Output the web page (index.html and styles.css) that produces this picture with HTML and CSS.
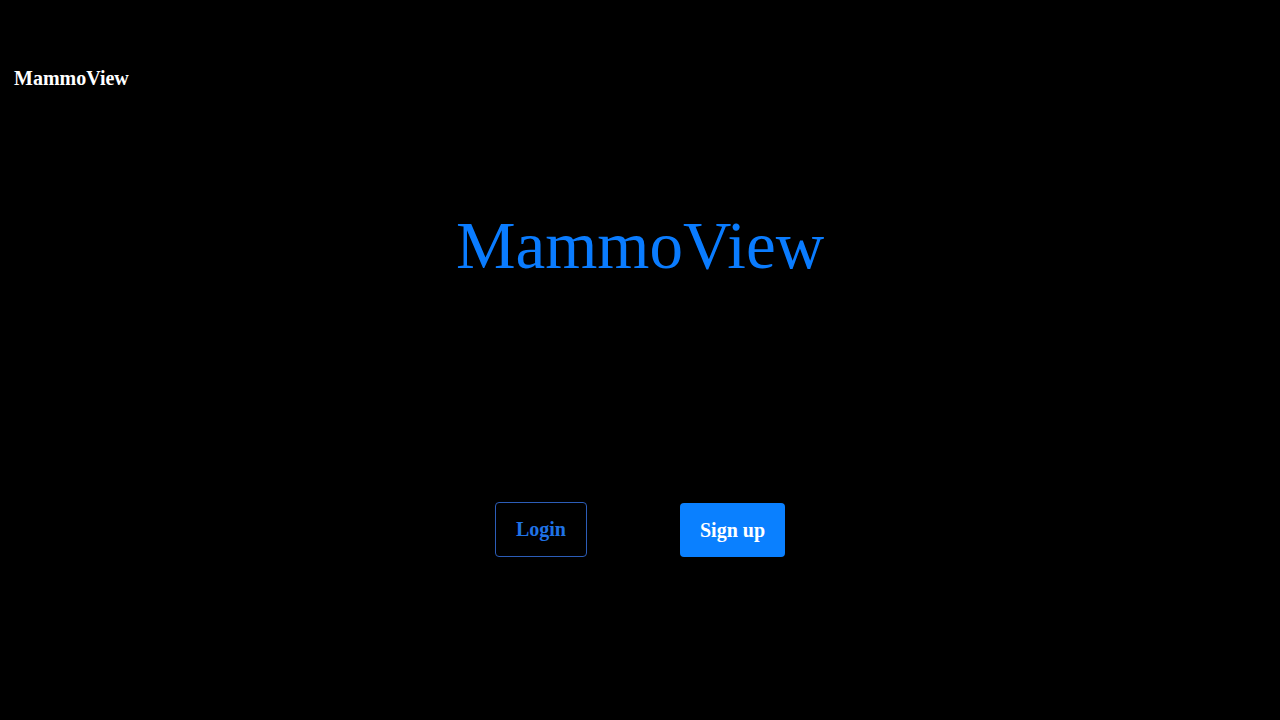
FILE: index.html
```html
<!DOCTYPE html>
<html lang="en">
<head>
<meta charset="utf-8">
<title>MammoView</title>
<link rel="stylesheet" href="styles.css">
</head>
<body>
<header class="topbar">
  <span class="brand">MammoView</span>
</header>
<main class="hero">
  <h1 class="hero-title">MammoView</h1>
  <div class="actions">
    <button class="btn btn-outline">Login</button>
    <button class="btn btn-solid">Sign up</button>
  </div>
</main>
</body>
</html>
```

FILE: styles.css
```css
html, body {
  margin: 0;
  padding: 0;
  background: #000;
  height: 100%;
}
body {
  font-family: "Liberation Serif", "Times New Roman", serif;
  color: #fff;
}
.topbar {
  padding: 67px 14px 0;
}
.brand {
  display: block;
  font-size: 20px;
  font-weight: bold;
  line-height: 23px;
  color: #fff;
}
.hero {
  display: flex;
  flex-direction: column;
  align-items: center;
}
.hero-title {
  margin: 117px 0 0;
  font-size: 67px;
  font-weight: normal;
  line-height: 77px;
  color: #0a7cff;
}
.actions {
  margin-top: 218px;
  display: flex;
  align-items: center;
  gap: 93px;
}
.btn {
  font-family: "Liberation Serif", "Times New Roman", serif;
  font-size: 20px;
  font-weight: bold;
  line-height: 23px;
  padding: 15px 20px;
  border-radius: 4px;
  cursor: pointer;
}
.btn-outline {
  background: transparent;
  color: #1f72e6;
  border: 1px solid #2c5db8;
}
.btn-solid {
  background: #0a80ff;
  color: #fff;
  border: none;
  padding: 16px 20px 15px;
}
```
